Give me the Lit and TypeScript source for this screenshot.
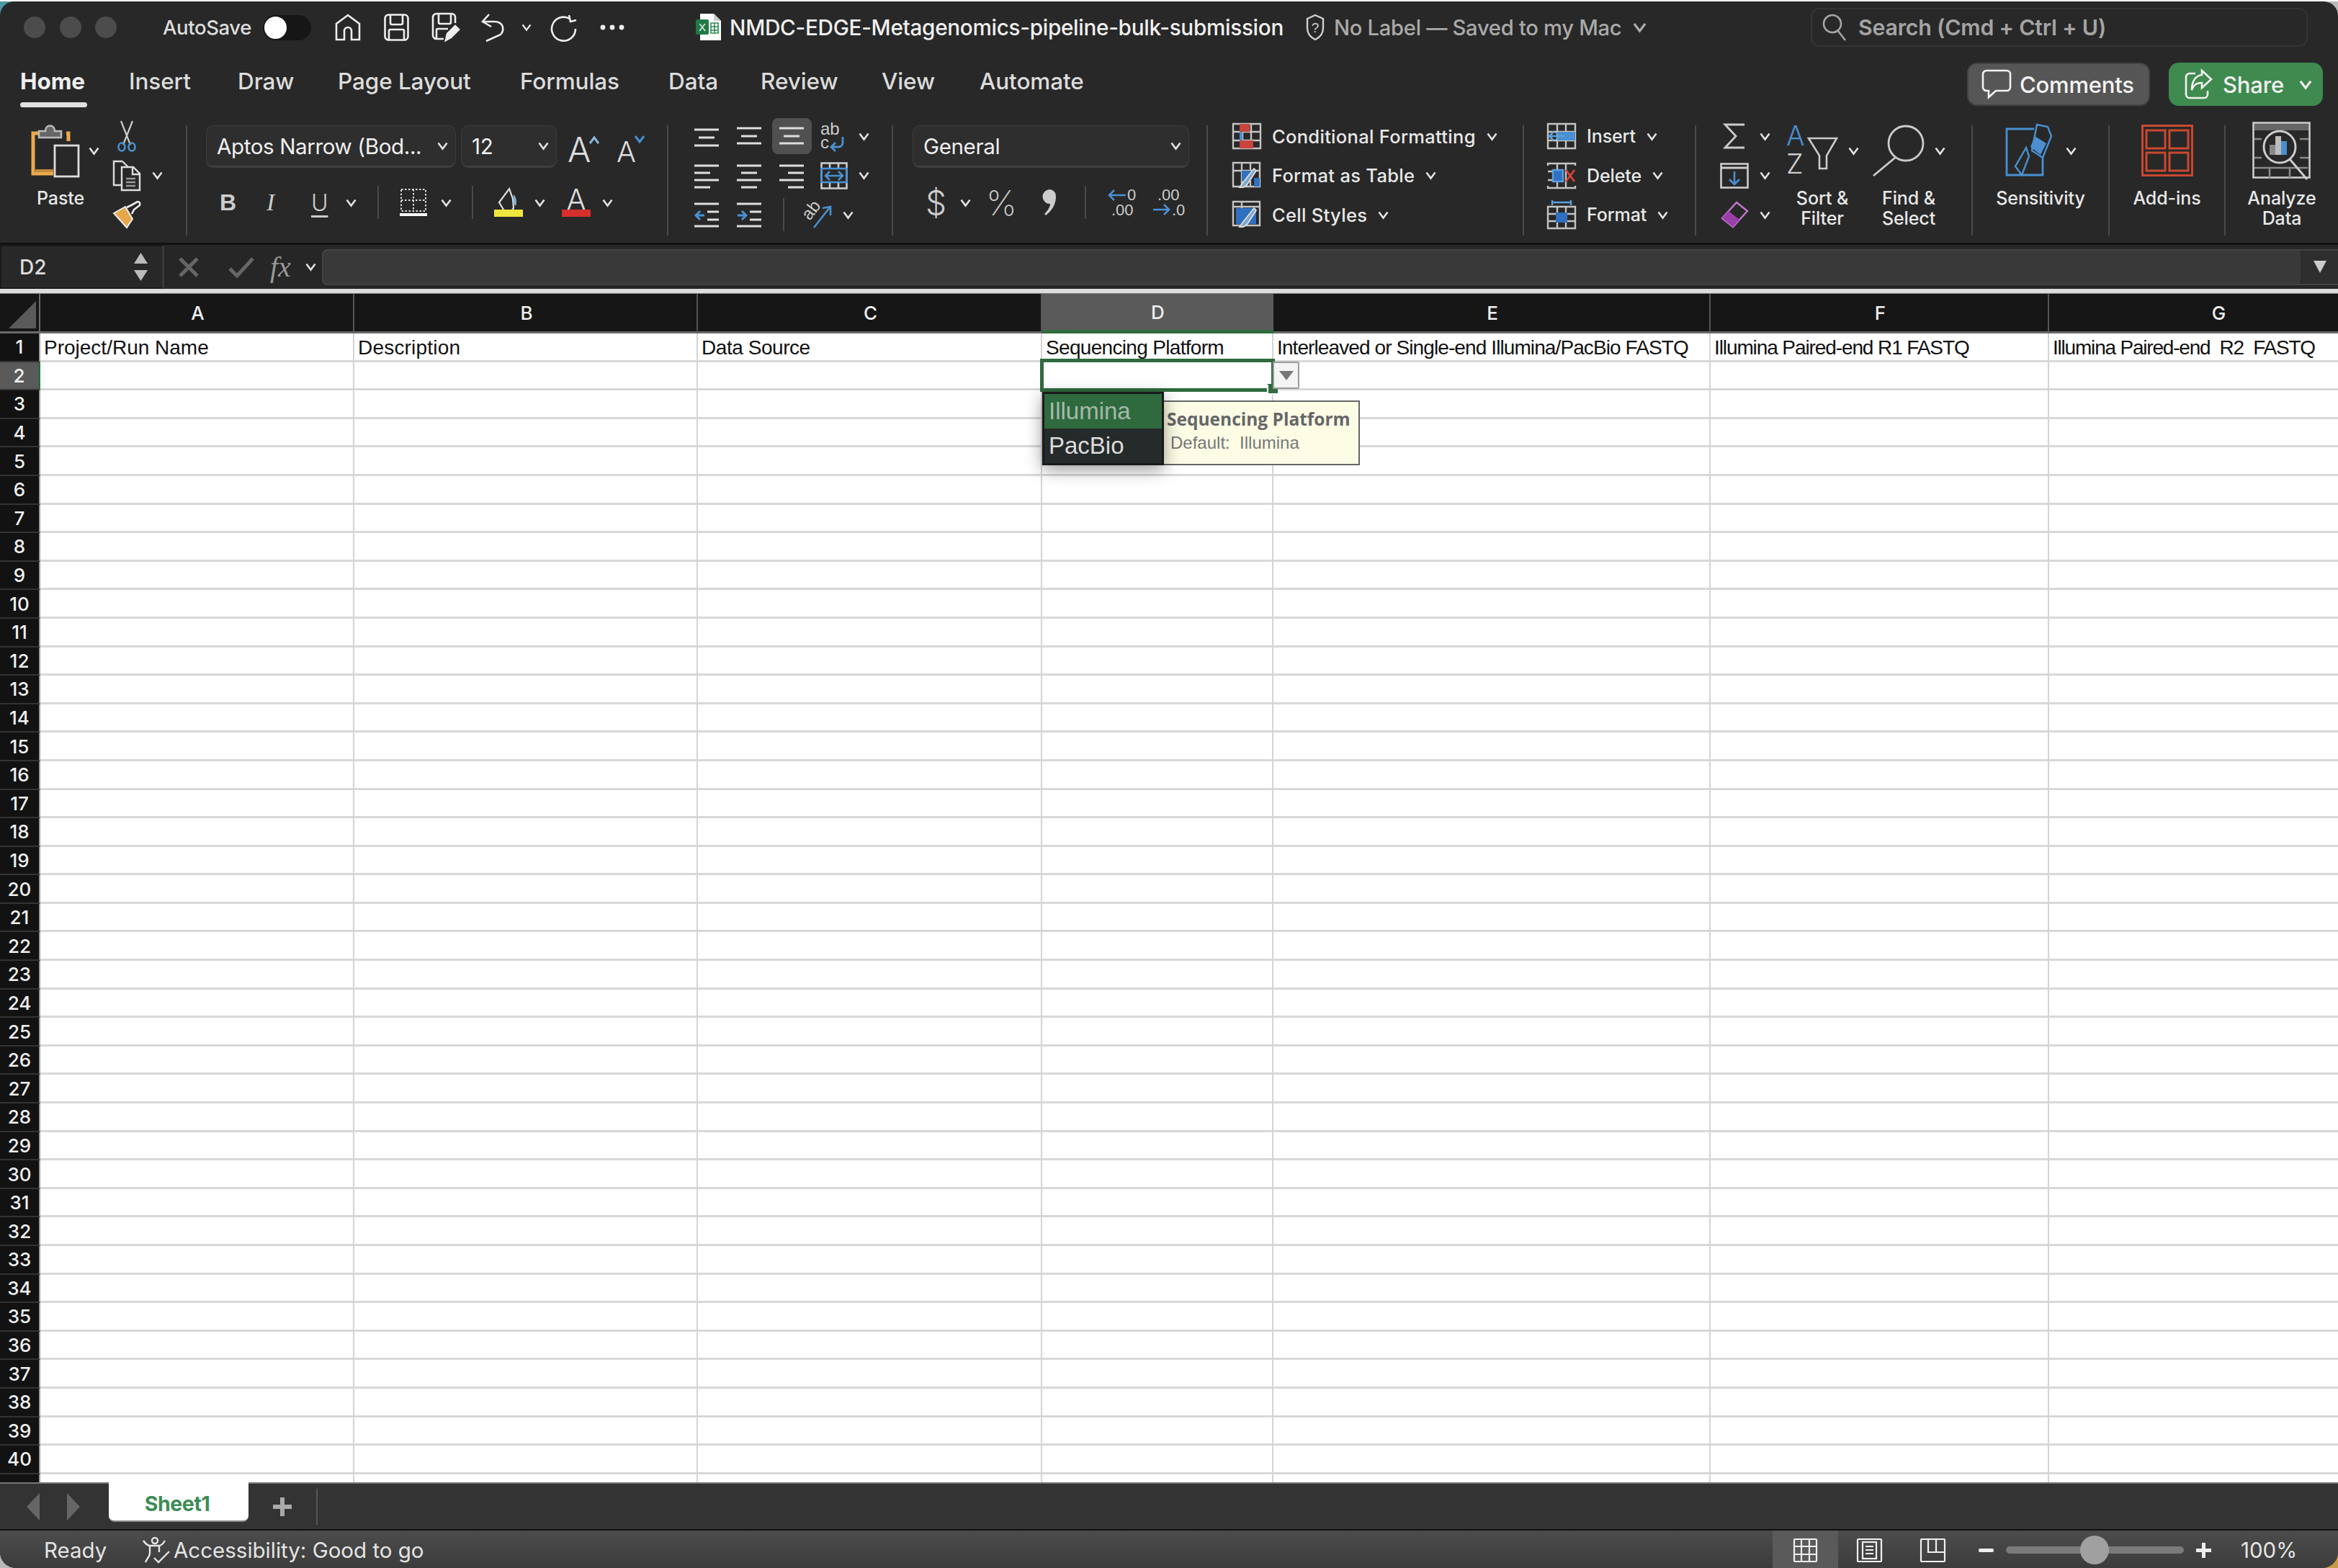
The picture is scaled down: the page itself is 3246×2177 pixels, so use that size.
import { LitElement, html, svg, css } from "lit";
import { customElement } from "lit/decorators.js";

const L = "#dedede";
const chev = (w = 15, c = "#e2e2e2") => html`<svg width=${w} height=${Math.round(w * 0.72)} viewBox="0 0 15 11" fill="none" stroke=${c} stroke-width="2.6"><path d="M1.5 1.5 7.5 9.5 13.5 1.5"/></svg>`;

const lines = (ls: number[][], w = 35, h = 32, blue = "") => html`<svg width=${w} height=${h} fill="none" stroke=${L} stroke-width="3">
  ${ls.map(([a, b, y]) => svg`<path d="M${a} ${y}H${b}"/>`)}
  ${blue ? svg`<path d=${blue} stroke="#4a90d0"/>` : ""}
</svg>`;

const I = {
  home: html`<svg width="36" height="38" fill="none" stroke="#eee" stroke-width="2.6"><path d="M2 36V14L18 2l16 12v22H23V24a5 5 0 0 0-10 0v12z"/></svg>`,
  save: html`<svg width="35" height="38" fill="none" stroke="#eee" stroke-width="2.6"><rect x="1.5" y="1.5" width="32" height="35" rx="5"/><path d="M9 2v11a2 2 0 0 0 2 2h13a2 2 0 0 0 2-2V2M7 36V24a2 2 0 0 1 2-2h17a2 2 0 0 1 2 2v12"/></svg>`,
  saveas: html`<svg width="38" height="41" fill="none" stroke="#eee" stroke-width="2.6"><path d="M16 36H6a5 5 0 0 1-5-5V6a5 5 0 0 1 5-5h21a5 5 0 0 1 5 5v8M9 2v11a2 2 0 0 0 2 2h13a2 2 0 0 0 2-2V2M6 36V24a2 2 0 0 1 2-2h14"/><path d="M19 38l2-9 11-11 5 5-11 11z" fill="#eee"/></svg>`,
  undo: html`<svg width="33" height="40" fill="none" stroke="#eee" stroke-width="2.6"><path d="M11 2 2 12l12 7M3 12h15c13 0 15 11 9 18L7 39"/></svg>`,
  redo: html`<svg width="36" height="38" fill="none" stroke="#eee" stroke-width="2.6"><path d="M26 7A16.500 16.500 0 1 0 34 21M25 2l2 9 8-2"/></svg>`,
  dots: html`<svg width="34" height="8" fill="#eee"><circle cx="4" cy="4" r="3.400"/><circle cx="17" cy="4" r="3.400"/><circle cx="30" cy="4" r="3.400"/></svg>`,
  excel: html`<svg width="36" height="38"><path d="M6 0h19l10 10v27H6z" fill="#fff"/><path d="M25 0l10 10H25z" fill="#ccc"/><rect y="8" width="18" height="21" rx="2" fill="#1f7a45"/><text x="9" y="24" font-size="15" fill="#fff" text-anchor="middle" font-family="Liberation Sans">X</text><path d="M21 13h10v14H21zM26 13v14M21 18h10M21 23h10" fill="none" stroke="#2c8a52" stroke-width="1.600"/></svg>`,
  shield: html`<svg width="28" height="38" fill="none" stroke="#d0d0d0" stroke-width="2.4"><path d="M14 2l11 5v13c0 8-5 13-11 16C8 33 3 28 3 20V7z"/><text x="14" y="26" font-size="19" fill="#d0d0d0" stroke="none" text-anchor="middle" font-family="Liberation Sans">?</text></svg>`,
  search: html`<svg width="34" height="40" fill="none" stroke="#a5a5a5" stroke-width="2.6"><circle cx="14" cy="15" r="12"/><path d="M22 25l10 13"/></svg>`,
  paste: html`<svg width="68" height="76" fill="none"><path d="M17 14H3v56h28M49 14h3v11" stroke="#eaa94e" stroke-width="5"/><path d="M6 66h25" stroke="#c58a3a" stroke-width="4"/><path d="M11 20v-9h9c0-10 13-10 13 0h9v9z" stroke="#bbb" fill="#666" stroke-width="2.600"/><rect x="33" y="31" width="33" height="43" stroke="#ddd" stroke-width="2.800" fill="#282828"/></svg>`,
  cut: html`<svg width="28" height="44" fill="none" stroke="#ccc" stroke-width="2.200"><path d="M6 1l13 33M22 1L9 34"/><ellipse cx="7" cy="37" rx="4.500" ry="5.500" stroke="#4a90d0" stroke-width="2.600"/><ellipse cx="21" cy="37" rx="4.500" ry="5.500" stroke="#4a90d0" stroke-width="2.600"/></svg>`,
  copy: html`<svg width="40" height="42" fill="none" stroke="#ddd" stroke-width="2.400"><path d="M14 1H2v33h10M14 1l8 8"/><path d="M13 9h16l9 9v23H13zM28 9v10h10"/><path d="M19 25h13M19 30h13M19 35h13" stroke="#999"/></svg>`,
  brush: html`<svg width="40" height="38" fill="none"><path d="M2 17l16-9 10 17-8 12z" fill="#e7a84c" stroke="#eee" stroke-width="2"/><path d="M20 9l6-3 9-5c3 0 4 3 3 5l-8 6-3 6" stroke="#eee" stroke-width="2.600"/></svg>`,
  border: html`<svg width="38" height="38" fill="none" stroke="#ddd" stroke-width="2"><path d="M2 1H36V31H2zM19 1V31M2 16H36" stroke-dasharray="2.500 2.500"/><path d="M0 36H38" stroke="#fff" stroke-width="4"/></svg>`,
  fill: html`<svg width="40" height="40" fill="none"><path d="M7 20L21 1l5 14 1 13-5 7H16z" stroke="#ddd" stroke-width="2.200"/><path d="M27 9c4 4 5 10 3 16-3-2-4-9-3-16z" fill="#7fb1dd"/><rect y="30" width="40" height="10" fill="#f0e63d"/></svg>`,
  fcolor: html`<svg width="40" height="40"><text x="20" y="30" font-size="40" font-family="Inter" font-weight="300" fill="#ddd" text-anchor="middle">A</text><rect y="30" width="40" height="10" fill="#d6302c"/></svg>`,
  wrap: html`<svg width="38" height="42" fill="none"><text x="0" y="19" font-size="24" font-family="Liberation Sans" fill="#ccc">ab</text><text x="0" y="38" font-size="24" font-family="Liberation Sans" fill="#ccc">c</text><path d="M31 22v8c0 4-3 6-6 6H15m6-6-6 6 6 6" stroke="#4a90d0" stroke-width="2.800"/></svg>`,
  merge: html`<svg width="38" height="38" fill="none" stroke="#ccc" stroke-width="2.600"><rect x="1.500" y="1.500" width="35" height="35"/><path d="M13 2v8M25 2v8M13 28v8M25 28v8"/><rect x="1.500" y="9" width="35" height="19" stroke="#4a90d0"/><path d="M8 19H30M13 13l-6 6 6 6M25 13l6 6-6 6" stroke="#4a90d0"/></svg>`,
  orient: html`<svg width="42" height="38" fill="none"><text transform="translate(8 28) rotate(-52)" font-size="24" font-family="Liberation Sans" fill="#ccc">ab</text><path d="M14 37 36 9M26 10l11-2 0 12" stroke="#4a90d0" stroke-width="2.600"/></svg>`,
  inc: html`<svg width="40" height="40" fill="none"><text x="28" y="17" font-size="22" font-family="Liberation Sans" fill="#ccc">0</text><text x="6" y="38" font-size="22" font-family="Liberation Sans" fill="#ccc">.00</text><path d="M26 10H3m7-7-7 7 7 7" stroke="#4a90d0" stroke-width="2.600"/></svg>`,
  dec: html`<svg width="40" height="40" fill="none"><text x="6" y="17" font-size="22" font-family="Liberation Sans" fill="#ccc">.00</text><text x="26" y="38" font-size="22" font-family="Liberation Sans" fill="#ccc">.0</text><path d="M0 30H22m-7-7 7 7-7 7" stroke="#4a90d0" stroke-width="2.600"/></svg>`,
  comma: html`<svg width="20" height="36" fill="#ccc"><path d="M10 0a9 9 0 0 1 9 10c0 11-6 20-14 26l-2-2c5-5 8-10 8-14a9 9 0 1 1-1-20z"/></svg>`,
  cond: html`<svg width="40" height="36" fill="none" stroke="#c4c4c4" stroke-width="2.400"><path d="M1 1H39V35H1zM14 1V35M26 1V35M1 12H39M1 24H39"/><rect x="10" y="1" width="14" height="11" fill="#c8443c" stroke="none"/><rect x="10" y="12" width="4" height="12" fill="#4a90d0" stroke="none"/><rect x="10" y="24" width="19" height="11" fill="#c8443c" stroke="none"/></svg>`,
  table: html`<svg width="40" height="38" fill="none" stroke="#c4c4c4" stroke-width="2.400"><path d="M1 1H38V34H1zM13 1V34M25 1V34M1 12H38"/><path d="M13 12h13v14H13zM30 22h8v12h-8z" fill="#2f70c0" stroke="none"/><path d="M10 35l5-7 15-19 3 3-13 20-5 3z" fill="#7fa8d0" stroke="#ddd" stroke-width="1.800"/></svg>`,
  cstyle: html`<svg width="40" height="38" fill="none" stroke="#c4c4c4" stroke-width="2.400"><path d="M1 1H38V34H1zM1 8H38M13 1V34"/><rect x="5" y="10" width="28" height="22" fill="#2f70c0" stroke="none"/><path d="M10 36l5-7 15-19 3 3-13 20-5 3z" fill="#7fa8d0" stroke="#ddd" stroke-width="1.800"/></svg>`,
  cins: html`<svg width="40" height="36" fill="none" stroke="#c4c4c4" stroke-width="2.400"><path d="M1 1H39V35H1zM14 1V35M26 1V35M1 12H39M1 24H39"/><rect x="14" y="12" width="25" height="12" fill="#4a90d0" stroke="none"/><path d="M24 18H3m6-6-6 6 6 6" stroke="#5aa0e0" stroke-width="2.600"/></svg>`,
  cdel: html`<svg width="40" height="36" fill="none" stroke="#c4c4c4" stroke-width="2.400"><path d="M1 4V1H39V4M1 32V35H39V32M14 1V35M26 1V35M1 12H10M1 24H10"/><rect x="8" y="10" width="14" height="16" fill="#2f70c0" stroke="#5aa0e0"/><path d="M26 10l12 16M38 10 26 26" stroke="#e04438" stroke-width="2.600"/></svg>`,
  cfmt: html`<svg width="40" height="40" fill="none" stroke="#c4c4c4" stroke-width="2.400"><path d="M1 9H39V39H1zM14 9V39M26 9V39M1 19H39M1 29H39"/><rect x="12" y="17" width="16" height="14" fill="#2f70c0" stroke="none"/><path d="M7 3H33M7 0v7M33 0v7" stroke="#5aa0e0"/></svg>`,
  sigma: html`<svg width="32" height="36" fill="none" stroke="#ccc" stroke-width="2.800"><path d="M30 2H3l15 16L3 34h27"/></svg>`,
  filld: html`<svg width="40" height="36" fill="none" stroke="#ccc" stroke-width="2.600"><rect x="1.500" y="1.500" width="37" height="33"/><path d="M1 7H39" stroke-width="3"/><path d="M20 12V30M13 23l7 7 7-7" stroke="#4a90d0"/></svg>`,
  eraser: html`<svg width="40" height="38" fill="none"><path d="M23 2 38 14 18 36 3 24z" stroke="#bd7ac8" stroke-width="2.400"/><path d="M12 14 27 26 18 36 3 24z" fill="#9b3fa8"/></svg>`,
  sort: html`<svg width="72" height="70" fill="none"><text x="0" y="28" font-size="38" font-family="Inter" font-weight="300" fill="#4a90d0">A</text><text x="0" y="67" font-size="38" font-family="Inter" font-weight="300" fill="#ccc">Z</text><path d="M31 18H70L56 42V60H46V42z" stroke="#ccc" stroke-width="2.600"/></svg>`,
  find: html`<svg width="72" height="72" fill="none" stroke="#ccc" stroke-width="2.800"><circle cx="46" cy="26" r="24"/><path d="M31 46 1 71"/></svg>`,
  sens: html`<svg width="70" height="76" fill="none"><path d="M40 8H2V72H52V46" stroke="#4a90d0" stroke-width="2.800"/><path d="M44 2l15 3 5 13-12 30-15-10zM29 34 14 60l9 12 10-26z" stroke="#4a90d0" stroke-width="2.400"/><path d="M41 18l16 10-8 16-14-11z" fill="#4a90d0"/></svg>`,
  addins: html`<svg width="72" height="72" fill="none" stroke="#c8492f" stroke-width="3"><rect x="1.500" y="1.500" width="69" height="69"/><rect x="7" y="8" width="26" height="25"/><rect x="39" y="8" width="26" height="25"/><rect x="7" y="39" width="26" height="25"/><rect x="39" y="39" width="26" height="25"/></svg>`,
  analyze: html`<svg width="82" height="80" fill="none"><rect x="1.500" y="1.500" width="78" height="76" stroke="#ccc" stroke-width="2.600"/><rect x="3" y="3" width="75" height="9" fill="#666"/><path d="M3 24h10M3 50h10M3 64h74M66 24h12M66 50h12M24 64v14M52 64v14" stroke="#888" stroke-width="2.600"/><circle cx="38" cy="35" r="22" stroke="#ccc" stroke-width="3" fill="#282828"/><rect x="24" y="32" width="8" height="14" fill="#888"/><rect x="32" y="20" width="8" height="26" fill="#bbb"/><rect x="40" y="27" width="8" height="19" fill="#4a90d0"/><path d="M52 52 76 80" stroke="#ccc" stroke-width="3"/></svg>`,
  comment: html`<svg width="40" height="40" fill="none" stroke="#f2f2f2" stroke-width="2.600"><path d="M6 1h28a5 5 0 0 1 5 5v18a5 5 0 0 1-5 5H19L9 38V29H6a5 5 0 0 1-5-5V6a5 5 0 0 1 5-5z"/></svg>`,
  share: html`<svg width="38" height="40" fill="none" stroke="#f2f2f2" stroke-width="2.600"><path d="M15 5H7a5 5 0 0 0-5 5v24a5 5 0 0 0 5 5h20a5 5 0 0 0 5-5v-5"/><path d="M24 1l13 12-13 12v-7c-7 0-11 2-14 10 0-12 5-20 14-21z"/></svg>`,
  a11y: html`<svg width="42" height="38" fill="none" stroke="#e6e6e6" stroke-width="2.400"><circle cx="20" cy="6" r="4"/><path d="M4 6c4 6 8 7 9 7h13c2 0 5-2 8-7M13 13v10c0 5-4 8-6 13M26 13v9"/><path d="M19 30l6 6 15-15"/></svg>`,
  vnorm: html`<svg width="33" height="33" fill="none" stroke="#f0f0f0" stroke-width="2.200"><rect x="1" y="1" width="31" height="31" rx="1"/><path d="M11 1V32M22 1V32M1 11H32M1 22H32"/></svg>`,
  vpage: html`<svg width="35" height="33" fill="none" stroke="#f0f0f0" stroke-width="2.200"><rect x="1" y="1" width="33" height="31" rx="1"/><rect x="8" y="5" width="19" height="23"/><path d="M12 11H23M12 16H23M12 21H23"/></svg>`,
  vbreak: html`<svg width="35" height="33" fill="none" stroke="#f0f0f0" stroke-width="2.200"><rect x="1" y="1" width="33" height="31" rx="1"/><path d="M11 1V19H34M22 1V19"/></svg>`,
};

const cols = ["A", "B", "C", "D", "E", "F", "G"];
const headers = [
  { t: "Project/Run Name", ls: 0 },
  { t: "Description", ls: 0.2 },
  { t: "Data Source", ls: -0.45 },
  { t: "Sequencing Platform", ls: -0.68 },
  { t: "Interleaved or Single-end Illumina/PacBio FASTQ", ls: -0.9 },
  { t: "Illumina Paired-end R1 FASTQ", ls: -1.1 },
  { t: "Illumina Paired-end  R2  FASTQ", ls: -1.2 },
];
const rows = Array.from({ length: 41 }, (_, i) => i + 1);

@customElement("app-root")
export class AppRoot extends LitElement {
  static styles = css`
    :host { display: block; width: 3246px; height: 2177px; background: linear-gradient(135deg, #4b9aa0 0 1%, #b9b9b9 1% 98%, #c79a4a 98%); font-family: Inter, "Liberation Sans", sans-serif; color: #e8e8e8; }
    * { box-sizing: border-box; }
    svg { display: block; flex: none; overflow: visible; }
    .win { display: flex; flex-direction: column; width: 100%; height: 2175px; margin-top: 2px; background: #282828; border-radius: 20px 20px 22px 22px; overflow: hidden; }

    .title { height: 72px; flex: none; display: grid; grid-template-columns: 193px 139px 100px 68px 67px 68px 56px 41px 68px 133px 47px 799px 40px 415px 247px 690px; padding-left: 33px; align-items: center; justify-items: start; white-space: nowrap; }
    .lights { display: flex; gap: 19.500px; }
    .lights i { width: 30px; height: 30px; border-radius: 50%; background: #4c4c4c; }
    .auto { font-size: 27.500px; font-weight: 500; color: #ddd; letter-spacing: -0.4px; }
    .toggle { width: 67px; height: 35px; border-radius: 18px; background: #161616; padding: 2px; }
    .toggle i { display: block; width: 31px; height: 31px; border-radius: 50%; background: #fff; }
    .doc { font-size: 29.700px; font-weight: 500; color: #f0f0f0; letter-spacing: -0.3px; }
    .lab { font-size: 29.200px; color: #aaa; font-weight: 500; letter-spacing: -0.3px; }
    .sbox { width: 690px; height: 54px; border: 2px solid #343434; border-radius: 12px; display: flex; align-items: center; gap: 16px; padding-left: 14px; font-size: 30.300px; font-weight: 600; color: #a4a4a4; letter-spacing: -0.2px; }

    .tabs { height: 86px; flex: none; display: flex; justify-content: space-between; }
    .tablist { display: grid; grid-template-columns: 151px 151px 139px 253px 206px 128px 168px 136px 160px; padding-left: 28px; padding-top: 19px; font-size: 31.500px; font-weight: 500; color: #dcdcdc; white-space: nowrap; letter-spacing: -0.1px; }
    .tablist .on { font-weight: 700; color: #eee; }
    .tablist .on::after { content: ""; display: block; width: 93px; height: 7px; border-radius: 4px; background: #e0e0e0; margin-top: 10px; }
    .btns { display: flex; gap: 26px; padding: 13px 21px 0 0; }
    .btn { height: 60px; border-radius: 14px; display: flex; align-items: center; font-size: 31px; font-weight: 500; color: #f4f4f4; white-space: nowrap; letter-spacing: -0.2px; }
    .comments { width: 254px; background: #565656; border: 2px solid #444; gap: 12px; padding-left: 19px; }
    .share { width: 214px; background: #3f8a4e; gap: 15px; padding-left: 22px; }
    .share svg:last-child { margin-left: 6px; }

    .ribbon { height: 177px; flex: none; display: grid; grid-template-columns: 260px 668px 312px 437px 439px 239px 384px 190px 161px 1fr; padding-top: 14px; }
    .grp { height: 153px; border-right: 2px solid #4a4a4a; white-space: nowrap; font-size: 25px; font-weight: 500; color: #e8e8e8; letter-spacing: -0.1px; }
    .grp.last { border-right: 0; }
    .clip { display: grid; grid-template-columns: 156px 1fr; }
    .big { display: flex; flex-direction: column; align-items: center; }
    .big .top { height: 82px; margin-top: -6px; display: flex; align-items: center; gap: 14px; }
    .big .t2 { line-height: 28px; text-align: center; margin-top: 11px; }
    .pcol { display: flex; flex-direction: column; padding-left: 12px; align-items: center; }
    .pcol .top { height: 82px; margin-top: -6px; width: 100%; display: flex; align-items: center; gap: 12px; padding-left: 31px; }
    .pcol .t2 { line-height: 28px; margin-top: 11px; }
    .rows3 { display: grid; grid-auto-rows: 54.500px; margin-top: -12px; align-items: center; }
    .row { display: flex; align-items: center; }
    .g15 { gap: 15px; }
    .sm { gap: 15px; }
    .ctr { width: 40px; display: flex; justify-content: center; }

    .font { padding-left: 26px; }
    .r1 { display: flex; align-items: center; height: 59px; }
    .dd { height: 59px; border-radius: 10px; background: #2e2e2e; border: 1px solid #3c3c3c; border-bottom: 3px solid #3e3e3e; display: flex; align-items: center; justify-content: space-between; padding: 0 10px 0 14px; font-size: 29.600px; font-weight: 400; color: #f0f0f0; letter-spacing: -0.4px; }
    .dd.ff { width: 347px; margin-right: 7px; }
    .dd.fs { width: 133px; margin-right: 15px; }
    .dd.gen { width: 384px; }
    .aup { width: 68px; } .adn { width: 50px; }
    .r2 { display: grid; align-items: center; justify-items: start; height: 60px; margin-top: 18px; }
    .font .r2 { grid-template-columns: 65px 62px 48px 44px 31px 57px 43px 31px 56px 38px 56px 20px; padding-left: 19px; }
    .b { font-size: 32px; font-weight: 700; color: #ccc; font-family: "Liberation Sans", sans-serif; }
    .i { font-size: 34px; font-style: italic; color: #ccc; font-family: "Liberation Serif", serif; }
    .u { font-size: 32px; color: #ccc; font-weight: 300; text-decoration: underline; text-underline-offset: 6px; }
    .vs { width: 2px; height: 46px; background: #4a4a4a; }

    .align { padding-left: 36px; }
    .arow { display: grid; align-items: center; justify-items: start; grid-template-columns: 59px 59px 57px 53px 20px; }
    .arow.low { grid-template-columns: 59px 64px 29px 54px 20px; }
    .hl { width: 55px; height: 50px; margin-left: -10px; background: #505050; border-radius: 8px; display: flex; align-items: center; justify-content: center; }

    .num { padding-left: 27px; }
    .num .r2 { grid-template-columns: 48px 39px 75px 59px 31px 64px 40px; padding-left: 18px; }
    .dollar { font-size: 46px; font-weight: 300; color: #ccc; }
    .pct { font-size: 48px; font-weight: 200; color: #ccc; margin-left: -3px; }

    .styles { padding-left: 34px; font-size: 25.500px; letter-spacing: 0.3px; }
    .cells { padding-left: 32px; }
    .edit { display: grid; grid-template-columns: 82px 120px 120px; padding-left: 33px; }
    .edit .row { gap: 15px; }

    .fx { height: 64px; flex: none; display: flex; align-items: center; border-top: 3px solid #111; background: #262626; }
    .name { width: 228px; height: 100%; background: #282828; border: 2px solid #1a1a1a; border-right: 3px solid #3a3a3a; display: flex; align-items: center; justify-content: space-between; padding: 0 20px 0 25px; font-size: 28px; font-weight: 500; color: #ddd; }
    .spin { display: flex; flex-direction: column; gap: 9px; }
    .fxbtns { display: grid; grid-template-columns: 69px 58px 49px 23px; padding-left: 20px; align-items: center; justify-items: start; }
    .fxt { font-family: "Liberation Serif", serif; font-style: italic; font-size: 40px; color: #999; line-height: 40px; }
    .input { flex: 1; height: 50px; background: #393939; border: 2px solid #444; border-right: 0; border-radius: 8px 0 0 8px; display: flex; justify-content: flex-end; }
    .inarrow { width: 52px; height: 100%; border-left: 2px solid #2c2c2c; background: #2e2e2e; display: flex; align-items: center; justify-content: center; }
    .rule { height: 7px; flex: none; background: #dcdcdc; border-bottom: 1px solid #777; }

    .sheet { flex: 1; position: relative; overflow: hidden; background: #fff; }
    .grid { display: grid; grid-template-columns: 56px 436px 477px 478px 321px 607px 470px 470px; grid-template-rows: 55px; grid-auto-rows: 39.600px; }
    .corner { background: #161616; border: 2px solid #6a6a6a; border-width: 0 2px 3px 0; padding: 10px 4px 4px 12px; }
    .ch { background: #161616; border-right: 2px solid #555; display: flex; align-items: center; justify-content: center; padding-left: 3px; font-size: 26px; font-weight: 500; color: #eee; border-bottom: 3px solid #6a6a6a; }
    .ch.sel { background: #5a5a5a; border-bottom: 5px solid #2f6b3e; border-right: 0; padding-left: 0; }
    .rh { background: #121212; border-bottom: 2px solid #333; border-right: 2px solid #9a9a9a; display: flex; align-items: center; justify-content: center; font-size: 26px; font-weight: 500; color: #f0f0f0; }
    .rh.sel { background: #5a5a5a; border-right: 3px solid #2f6b3e; }
    .c { border-right: 2px solid #d4d4d4; border-bottom: 3px solid #d8d8d8; padding-left: 5px; padding-top: 4px; display: flex; align-items: center; font-family: "Liberation Sans", sans-serif; font-size: 28px; color: #111; white-space: pre; }

    .sel-cell { position: absolute; left: 1444px; top: 90px; width: 326px; height: 46px; border: 5px solid #2f6b3e; }
    .handle { position: absolute; left: 1759px; top: 125px; width: 15px; height: 15px; background: #2f6b3e; border: 2px solid #fff; border-right: 0; border-top-color: transparent; }
    .dbtn { position: absolute; left: 1767px; top: 94px; width: 37px; height: 38px; background: #f4f4f4; border: 2px solid #999; border-radius: 0 3px 3px 0; display: flex; align-items: center; justify-content: center; }
    .list { position: absolute; left: 1447px; top: 136px; width: 169px; height: 102px; background: #252b2b; border: 3px solid #1a1a1a; box-shadow: 0 6px 22px rgba(0,0,0,.4); font-family: "Liberation Sans", sans-serif; font-size: 33px; z-index: 2; }
    .list div { height: 48px; display: flex; align-items: center; padding-left: 6px; color: #dcdcdc; }
    .list .on { background: #2e6a3d; color: #a6b9a9; }
    .tip { position: absolute; left: 1607px; top: 148px; width: 281px; height: 90px; background: #fdfde6; border: 2px solid #666; padding: 7px 0 0 11px; font-family: "Liberation Sans", sans-serif; font-size: 25px; color: #777; line-height: 33px; white-space: pre; }
    .tip b { color: #666; display: block; font-family: "Open Sans", sans-serif; font-size: 24.500px; }
    .tip span { display: block; padding-left: 5px; font-size: 24px; }

    .tabbar { height: 65px; flex: none; background: #333; border-top: 2px solid #777; display: grid; grid-template-columns: 151px 194px 94px 2px; align-items: center; }
    .nav { display: flex; gap: 38px; padding-left: 37px; }
    .sheettab { align-self: start; margin-top: -2px; height: 55px; background: #fff; border-radius: 0 0 8px 8px; color: #3c8c55; font-weight: 700; font-size: 28.500px; letter-spacing: -0.4px; display: flex; align-items: center; justify-content: center; border-bottom: 2px solid #888; padding-top: 5px; padding-right: 4px; }
    .plus { display: flex; justify-content: center; }
    .tabsep { width: 2px; height: 50px; background: #555; }

    .status { height: 54px; flex: none; border-top: 2px solid #111; background: linear-gradient(#4c4c4c, #3c3c3c); display: grid; grid-template-columns: 134px 46px 2220px 91px 111px 88px 34px 264px 62px 1fr; align-items: center; padding-left: 61px; font-size: 29.500px; color: #e4e4e4; font-weight: 400; white-space: nowrap; }
    .status > div { display: flex; align-items: center; }
    .vsel { height: 54px; background: #5a5a5a; justify-content: center; }
    .vbtn { padding-left: 26px; height: 54px; }
    .vb2 { padding-left: 3px; }
    .minus { width: 21px; height: 5px; background: #eee; border-radius: 2px; margin-left: -4px; }
    .track { position: relative; width: 247px; height: 10px; background: #7a7a7a; border-radius: 5px; }
    .thumb { position: absolute; left: 103px; top: -15px; width: 40px; height: 40px; border-radius: 50%; background: #a0a0a0; }
  `;

  render() {
    return html`<div class="win">
      <div class="title">
        <div class="lights"><i></i><i></i><i></i></div>
        <div class="auto">AutoSave</div>
        <div class="toggle"><i></i></div>
        ${I.home}${I.save}${I.saveas}${I.undo}${chev(14, "#eee")}${I.redo}${I.dots}${I.excel}
        <div class="doc">NMDC-EDGE-Metagenomics-pipeline-bulk-submission</div>
        ${I.shield}
        <div class="lab">No Label — Saved to my Mac</div>
        ${chev(19, "#aaa")}
        <div class="sbox">${I.search}Search (Cmd + Ctrl + U)</div>
      </div>

      <div class="tabs">
        <div class="tablist">
          <div class="on">Home</div><div>Insert</div><div>Draw</div><div>Page Layout</div><div>Formulas</div><div>Data</div><div>Review</div><div>View</div><div>Automate</div>
        </div>
        <div class="btns">
          <div class="btn comments">${I.comment}Comments</div>
          <div class="btn share">${I.share}Share ${chev(18, "#f4f4f4")}</div>
        </div>
      </div>

      <div class="ribbon">
        <div class="grp clip">
          <div class="pcol"><div class="top">${I.paste}${chev()}</div><div class="t2">Paste</div></div>
          <div class="rows3">
            <div class="row"><div class="ctr">${I.cut}</div></div>
            <div class="row sm"><div class="ctr">${I.copy}</div>${chev()}</div>
            <div class="row"><div class="ctr">${I.brush}</div></div>
          </div>
        </div>

        <div class="grp font">
          <div class="r1">
            <div class="dd ff">Aptos Narrow (Bod...${chev()}</div>
            <div class="dd fs">12${chev()}</div>
            <svg class="aup" width="68" height="50"><text x="0" y="46" font-size="48" font-family="Inter" font-weight="300" fill="#ddd">A</text><path d="M31 20l6-8 6 8" fill="none" stroke="#8db8dc" stroke-width="3"/></svg>
            <svg class="adn" width="50" height="50"><text x="0" y="46" font-size="40" font-family="Inter" font-weight="300" fill="#ddd">A</text><path d="M26 10l6 8 6-8" fill="none" stroke="#4a90d0" stroke-width="3"/></svg>
          </div>
          <div class="r2">
            <span class="b">B</span><span class="i">I</span><span class="u">U</span>${chev()}<div class="vs"></div>${I.border}${chev()}<div class="vs"></div>${I.fill}${chev()}${I.fcolor}${chev()}
          </div>
        </div>

        <div class="grp align">
          <div class="rows3">
            <div class="arow">
              ${lines([[0, 34, 7], [6, 28, 18], [0, 34, 29]])}
              ${lines([[0, 34, 5], [6, 28, 16], [0, 34, 26]])}
              <div class="hl">${lines([[0, 34, 5], [6, 28, 16], [0, 34, 26]], 35, 32)}</div>
              ${I.wrap}${chev()}
            </div>
            <div class="arow">
              ${lines([[0, 34, 2], [0, 22, 12], [0, 34, 22], [0, 22, 32]])}
              ${lines([[0, 34, 2], [6, 28, 12], [0, 34, 22], [6, 28, 32]])}
              ${lines([[0, 34, 2], [12, 34, 12], [0, 34, 22], [12, 34, 32]])}
              ${I.merge}${chev()}
            </div>
            <div class="arow low">
              ${lines([[0, 34, 2], [18, 34, 13], [18, 34, 24], [0, 34, 33]], 35, 34, "M14 18H2m6-6-6 6 6 6")}
              ${lines([[0, 34, 2], [18, 34, 13], [18, 34, 24], [0, 34, 33]], 35, 34, "M1 18H13m-6-6 6 6-6 6")}
              <div class="vs"></div>
              ${I.orient}${chev()}
            </div>
          </div>
        </div>

        <div class="grp num">
          <div class="r1"><div class="dd gen">General${chev()}</div></div>
          <div class="r2">
            <span class="dollar">$</span>${chev()}<span class="pct">%</span>${I.comma}<div class="vs"></div>${I.inc}${I.dec}
          </div>
        </div>

        <div class="grp styles">
          <div class="rows3">
            <div class="row g15">${I.cond}<span>Conditional Formatting</span>${chev()}</div>
            <div class="row g15">${I.table}<span>Format as Table</span>${chev()}</div>
            <div class="row g15">${I.cstyle}<span>Cell Styles</span>${chev()}</div>
          </div>
        </div>

        <div class="grp cells">
          <div class="rows3">
            <div class="row g15">${I.cins}<span>Insert</span>${chev()}</div>
            <div class="row g15">${I.cdel}<span>Delete</span>${chev()}</div>
            <div class="row g15">${I.cfmt}<span>Format</span>${chev()}</div>
          </div>
        </div>

        <div class="grp edit">
          <div class="rows3">
            <div class="row"><div class="ctr">${I.sigma}</div>${chev()}</div>
            <div class="row"><div class="ctr">${I.filld}</div>${chev()}</div>
            <div class="row"><div class="ctr">${I.eraser}</div>${chev()}</div>
          </div>
          <div class="big"><div class="top">${I.sort}${chev()}</div><div class="t2">Sort &amp;<br />Filter</div></div>
          <div class="big"><div class="top">${I.find}${chev()}</div><div class="t2">Find &amp;<br />Select</div></div>
        </div>

        <div class="grp big"><div class="top">${I.sens}${chev()}</div><div class="t2">Sensitivity</div></div>
        <div class="grp big"><div class="top">${I.addins}</div><div class="t2">Add-ins</div></div>
        <div class="grp big last"><div class="top">${I.analyze}</div><div class="t2">Analyze<br />Data</div></div>
      </div>

      <div class="fx">
        <div class="name">D2
          <div class="spin">
            <svg width="19" height="15"><path d="M9.500 0 19 15H0z" fill="#bbb"/></svg>
            <svg width="19" height="15"><path d="M9.500 15 19 0H0z" fill="#bbb"/></svg>
          </div>
        </div>
        <div class="fxbtns">
          <svg width="28" height="28" fill="none" stroke="#666" stroke-width="5"><path d="M2 2l24 24M26 2 2 26"/></svg>
          <svg width="36" height="28" fill="none" stroke="#666" stroke-width="5"><path d="M2 16l10 10L34 2"/></svg>
          <span class="fxt">fx</span>
          ${chev()}
        </div>
        <div class="input"><div class="inarrow"><svg width="18" height="17"><path d="M0 0H18L9 17z" fill="#ccc"/></svg></div></div>
      </div>
      <div class="rule"></div>

      <div class="sheet">
        <div class="grid">
          <div class="corner"><svg width="38" height="38"><path d="M38 0V38H0z" fill="#5a5a5a"/></svg></div>
          ${cols.map((c) => html`<div class="ch ${c === "D" ? "sel" : ""}">${c}</div>`)}
          ${rows.map((r) => html`<div class="rh ${r === 2 ? "sel" : ""}">${r <= 40 ? r : ""}</div>${cols.map((_, i) => html`<div class="c" style=${r === 1 ? `letter-spacing:${headers[i].ls}px` : ""}>${r === 1 ? headers[i].t : ""}</div>`)}`)}
        </div>
        <div class="sel-cell"></div>
        <div class="handle"></div>
        <div class="dbtn"><svg width="20" height="13"><path d="M0 0H20L10 13z" fill="#777"/></svg></div>
        <div class="tip"><b>Sequencing Platform</b><span>Default:  Illumina</span></div>
        <div class="list"><div class="on">Illumina</div><div>PacBio</div></div>
      </div>

      <div class="tabbar">
        <div class="nav">
          <svg width="18" height="38"><path d="M18 0V38L0 19z" fill="#666"/></svg>
          <svg width="18" height="38"><path d="M0 0V38L18 19z" fill="#666"/></svg>
        </div>
        <div class="sheettab">Sheet1</div>
        <div class="plus"><svg width="26" height="26" fill="#aaa"><path d="M10 0h6v10h10v6H16v10h-6V16H0v-6h10z"/></svg></div>
        <div class="tabsep"></div>
      </div>

      <div class="status">
        <div>Ready</div>
        <div>${I.a11y}</div>
        <div>Accessibility: Good to go</div>
        <div class="vsel">${I.vnorm}</div>
        <div class="vbtn">${I.vpage}</div>
        <div class="vb2">${I.vbreak}</div>
        <div><div class="minus"></div></div>
        <div><div class="track"><div class="thumb"></div></div></div>
        <div><svg width="21" height="21" fill="#eee"><path d="M8 0h5v8h8v5h-8v8H8v-8H0V8h8z"/></svg></div>
        <div>100%</div>
      </div>
    </div>`;
  }
}
